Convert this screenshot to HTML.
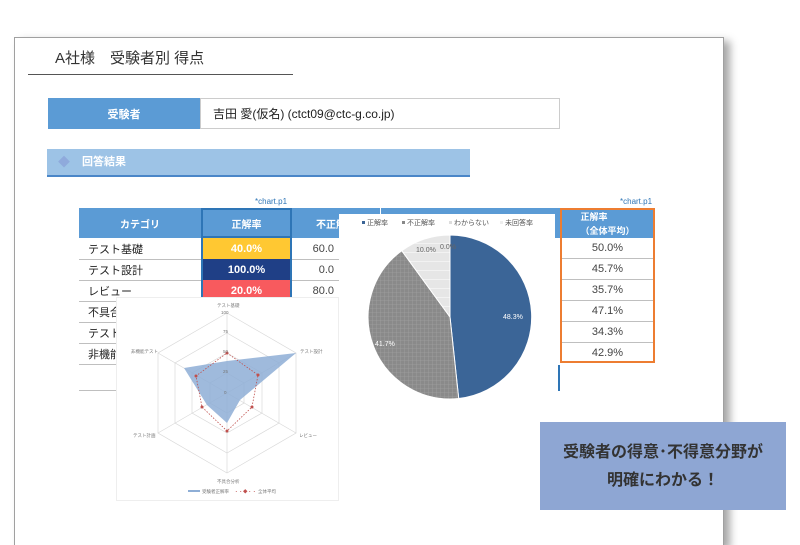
<!DOCTYPE html>
<html style="height:545px;overflow:hidden;"><head><meta charset="utf-8"><style>
body{margin:0;width:800px;height:545px;background:#fff;position:relative;overflow:hidden;font-family:"Liberation Sans","Noto Sans CJK JP",sans-serif;}
.a{position:absolute;}
.page{left:14px;top:37px;width:708px;height:508px;border:1px solid #a0a0a0;border-bottom:none;background:#fff;box-shadow:6px 4px 8px rgba(0,0,0,0.35);}
.cell{position:absolute;box-sizing:border-box;font-size:11px;display:flex;align-items:center;font-weight:normal;color:#222;}
.c{justify-content:center;}
.r{justify-content:flex-end;padding-right:6px;}
.hd{background:#5b9bd5;color:#fff;font-weight:bold;font-size:10px;}
.row{position:absolute;left:79px;width:300px;height:1px;background:#bfbfbf;}
</style></head><body>
<div class="a page"></div>
<div class="a" style="left:55px;top:47px;font-size:15px;color:#333;">A社様　受験者別 得点</div>
<div class="a" style="left:28px;top:74px;width:265px;height:1px;background:#555;"></div>

<div class="cell hd c" style="left:48px;top:98px;width:152px;height:31px;font-size:11px;">受験者</div>
<div class="cell" style="left:200px;top:98px;width:360px;height:31px;border:1px solid #ccc;padding-left:12px;font-size:12px;color:#222;">吉田 愛(仮名) (ctct09@ctc-g.co.jp)</div>

<div class="a" style="left:47px;top:149px;width:423px;height:26px;background:#9dc3e6;border-bottom:2px solid #4a86c8;"></div>
<div class="a" style="left:58px;top:153px;color:#8faadc;font-size:12px;">◆</div>
<div class="a" style="left:82px;top:153px;color:#fff;font-weight:bold;font-size:11px;">回答結果</div>

<div class="a" style="left:255px;top:197px;font-size:8px;color:#2e75b6;">*chart.p1</div>
<div class="a" style="left:620px;top:197px;font-size:8px;color:#2e75b6;">*chart.p1</div>

<div class="cell hd c" style="left:79px;top:208px;width:122px;height:30px;">カテゴリ</div>
<div class="cell hd c" style="left:201px;top:208px;width:91px;height:30px;border:2px solid #2e75b6;">正解率</div>
<div class="cell hd c" style="left:292px;top:208px;width:88px;height:30px;">不正解率</div>
<div class="cell hd c" style="left:380px;top:208px;width:180px;height:30px;border-left:1px solid #fff;">わからない</div>

<div class="cell" style="left:88px;top:238px;height:21px;">テスト基礎</div>
<div class="cell" style="left:88px;top:259px;height:21px;">テスト設計</div>
<div class="cell" style="left:88px;top:280px;height:21px;">レビュー</div>
<div class="cell" style="left:88px;top:301px;height:21px;">不具合分析</div>
<div class="cell" style="left:88px;top:322px;height:21px;">テスト計画</div>
<div class="cell" style="left:88px;top:343px;height:21px;">非機能テスト</div>
<div class="row" style="top:259px"></div><div class="row" style="top:280px"></div><div class="row" style="top:301px"></div><div class="row" style="top:322px"></div><div class="row" style="top:343px"></div><div class="row" style="top:364px"></div><div class="row" style="top:390px"></div>
<div class="cell c" style="left:201px;top:238px;width:91px;height:21px;background:#ffc832;color:#fff;font-weight:bold;border-left:2px solid #2e75b6;border-right:2px solid #2e75b6;">40.0%</div>
<div class="cell c" style="left:201px;top:259px;width:91px;height:21px;background:#1f3f86;color:#fff;font-weight:bold;border-left:2px solid #2e75b6;border-right:2px solid #2e75b6;">100.0%</div>
<div class="cell c" style="left:201px;top:280px;width:91px;height:21px;background:#f85a5e;color:#fff;font-weight:bold;border-left:2px solid #2e75b6;border-right:2px solid #2e75b6;">20.0%</div>
<div class="cell r" style="left:292px;top:238px;width:48px;height:21px;color:#444;">60.0</div>
<div class="cell r" style="left:292px;top:259px;width:48px;height:21px;color:#444;">0.0</div>
<div class="cell r" style="left:292px;top:280px;width:48px;height:21px;color:#444;">80.0</div>
<div class="a" style="left:558px;top:365px;width:2px;height:26px;background:#2e75b6;"></div>

<div class="a" style="left:560px;top:208px;width:95px;height:155px;border:2px solid #ed7d31;box-sizing:border-box;"></div>
<div class="cell hd c" style="left:562px;top:210px;width:91px;height:28px;flex-direction:column;line-height:14px;font-size:9px;">正解率<br>（全体平均）</div>
<div class="cell c" style="left:562px;top:238px;width:91px;height:21px;color:#444;border-bottom:1px solid #bfbfbf;">50.0%</div>
<div class="cell c" style="left:562px;top:259px;width:91px;height:21px;color:#444;border-bottom:1px solid #bfbfbf;">45.7%</div>
<div class="cell c" style="left:562px;top:280px;width:91px;height:21px;color:#444;border-bottom:1px solid #bfbfbf;">35.7%</div>
<div class="cell c" style="left:562px;top:301px;width:91px;height:21px;color:#444;border-bottom:1px solid #bfbfbf;">47.1%</div>
<div class="cell c" style="left:562px;top:322px;width:91px;height:21px;color:#444;border-bottom:1px solid #bfbfbf;">34.3%</div>
<div class="cell c" style="left:562px;top:343px;width:91px;height:19px;color:#444;">42.9%</div>

<div class="a" style="left:339px;top:214px;width:216px;height:192px;background:#fff;"></div>
<svg class="a" style="left:0;top:0" width="800" height="545">
<defs><pattern id="g" width="4" height="4" patternUnits="userSpaceOnUse"><rect width="4" height="4" fill="#8a8a8a"/><path d="M0 0H4M0 0V4" stroke="#a8a8a8" stroke-width="0.6"/></pattern>
<pattern id="h" width="6" height="9" patternUnits="userSpaceOnUse"><rect width="6" height="9" fill="#e6e6e6"/><path d="M0 0H6" stroke="#fff" stroke-width="1"/></pattern></defs>
<path d="M450 317 L450 235 A82 82 0 0 1 458.7 398.5 Z" fill="#3b6597" stroke="#fff" stroke-width="1"/>
<path d="M450 317 L458.7 398.5 A82 82 0 0 1 401.8 250.7 Z" fill="url(#g)" stroke="#fff" stroke-width="1"/>
<path d="M450 317 L401.8 250.7 A82 82 0 0 1 450 235 Z" fill="url(#h)" stroke="#fff" stroke-width="1"/>
<text x="503" y="319" font-size="7" fill="#fff" font-family="Liberation Sans">48.3%</text>
<text x="375" y="346" font-size="7" fill="#fff" font-family="Liberation Sans">41.7%</text>
<text x="416" y="252" font-size="7" fill="#666" font-family="Liberation Sans">10.0%</text>
<text x="440" y="249" font-size="7" fill="#666" font-family="Liberation Sans">0.0%</text>
<g font-size="7" fill="#555" font-family="Liberation Sans,Noto Sans CJK JP,sans-serif">
<rect x="362" y="221" width="3" height="3" fill="#3b6597"/><text x="367" y="225">正解率</text>
<rect x="402" y="221" width="3" height="3" fill="#888"/><text x="407" y="225">不正解率</text>
<rect x="449" y="221" width="3" height="3" fill="#ddd"/><text x="454" y="225">わからない</text>
<rect x="500" y="221" width="3" height="3" fill="#eee"/><text x="505" y="225">未回答率</text>
</g>
</svg>

<div class="a" style="left:116px;top:297px;width:221px;height:202px;background:#fff;border:1px solid #eee;"></div>
<svg class="a" style="left:0;top:0" width="800" height="545">
<g fill="none" stroke="#d9d9d9" stroke-width="0.7">
<polygon points="227,313 296,353 296,433 227,473 158,433 158,353"/>
<polygon points="227,333 279,363 279,423 227,453 175,423 175,363"/>
<polygon points="227,353 262,373 262,413 227,433 192,413 192,373"/>
<polygon points="227,373 244,383 244,403 227,413 210,403 210,383"/>
<path d="M227 393L227 313M227 393L296 353M227 393L296 433M227 393L227 473M227 393L158 433M227 393L158 353"/>
</g>
<polygon points="227,361 296,353 240,400 227,423 207,405 184,368" fill="#8eaed6" opacity="0.85"/>
<polygon points="227,353 258,375 252,407 227,431 202,407 196,376" fill="none" stroke="#c0504d" stroke-width="0.8" stroke-dasharray="1.5,1.5"/>
<g fill="#c0504d"><circle cx="227" cy="353" r="1.5"/><circle cx="258" cy="375" r="1.5"/><circle cx="252" cy="407" r="1.5"/><circle cx="227" cy="431" r="1.5"/><circle cx="202" cy="407" r="1.5"/><circle cx="196" cy="376" r="1.5"/></g>
<g font-size="4.5" fill="#777" font-family="Liberation Sans,Noto Sans CJK JP,sans-serif">
<text x="217" y="307">テスト基礎</text><text x="300" y="353">テスト設計</text><text x="299" y="437">レビュー</text>
<text x="217" y="483">不具合分析</text><text x="133" y="437">テスト計画</text><text x="131" y="353">非機能テスト</text>
<text x="221" y="314">100</text><text x="223" y="333">75</text><text x="223" y="353">50</text><text x="223" y="373">25</text><text x="224" y="394">0</text>
<rect x="188" y="490" width="12" height="2" fill="#8eaed6"/><text x="202" y="493">受験者正解率</text>
<text x="234" y="493" fill="#c0504d">・・◆・・</text><text x="258" y="493">全体平均</text>
</g>
</svg>

<div class="a" style="left:540px;top:422px;width:246px;height:88px;background:#8ea6d3;color:#333;font-size:16px;font-weight:bold;text-align:center;line-height:28px;padding-top:17px;box-sizing:border-box;">受験者の得意･不得意分野が<br>明確にわかる！</div>
</body></html>
